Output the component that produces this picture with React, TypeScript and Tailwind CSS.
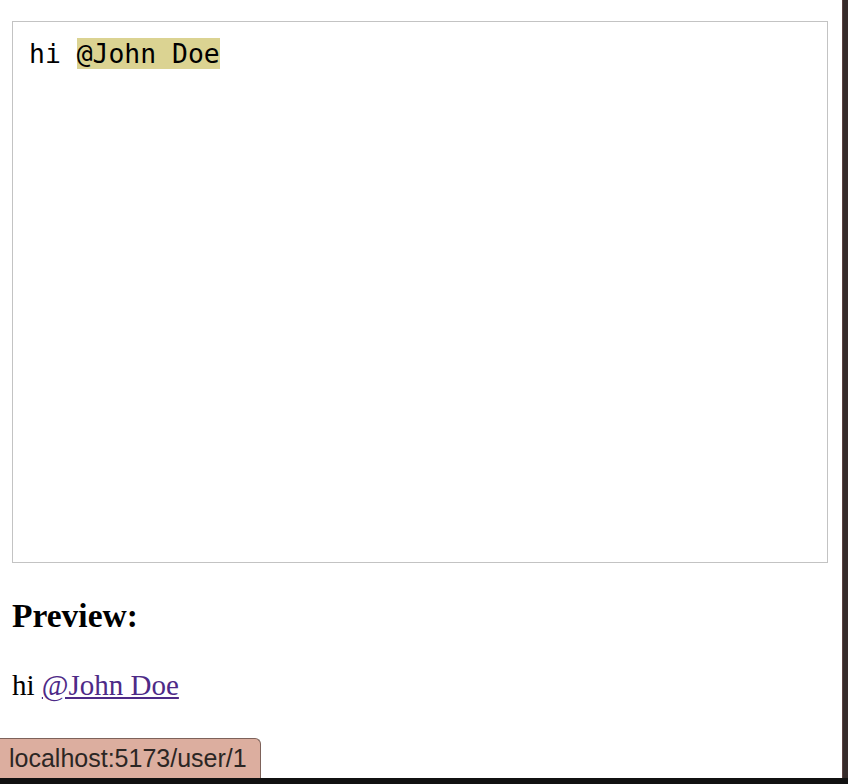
import React from "react";

export default function App() {
  return (
    <div className="relative w-[848px] h-[784px] bg-white overflow-hidden flex flex-col">
      <div className="flex flex-1 min-h-0">
        <div className="flex-1 pl-[12px] pr-[14px] pt-[21px]">
          <div
            className="h-[542px] border border-[#c3c3c3] p-[16px] text-[26.4px] leading-[31px] text-black whitespace-pre"
            style={{ fontFamily: '"DejaVu Sans Mono", "Liberation Mono", monospace' }}
          >
            hi <span className="bg-[#dbd392]">@John Doe</span>
          </div>
          <h2
            className="mt-[33px] text-[33.5px] leading-[40px] font-bold text-black"
            style={{ fontFamily: '"Liberation Serif", "Times New Roman", serif' }}
          >
            Preview:
          </h2>
          <p
            className="mt-[32px] text-[29px] leading-[34px] text-black"
            style={{ fontFamily: '"Liberation Serif", "Times New Roman", serif' }}
          >
            hi{" "}
            <a href="#" className="text-[#4e2a87] underline">
              @John Doe
            </a>
          </p>
        </div>
        <div className="w-[6px] bg-[#362c2b] border-l border-[#5b4342]" />
      </div>
      <div className="h-[6px] bg-[#111111]" />
      <div
        className="absolute left-0 top-[738px] h-[40px] w-[261px] bg-[#dcae9f] border-t border-r border-[#7d625a] rounded-tr-[6px] flex items-center pl-[9px] text-[25px] text-[#2b2624]"
        style={{ fontFamily: '"Liberation Sans", Arial, sans-serif' }}
      >
        localhost:5173/user/1
      </div>
    </div>
  );
}
